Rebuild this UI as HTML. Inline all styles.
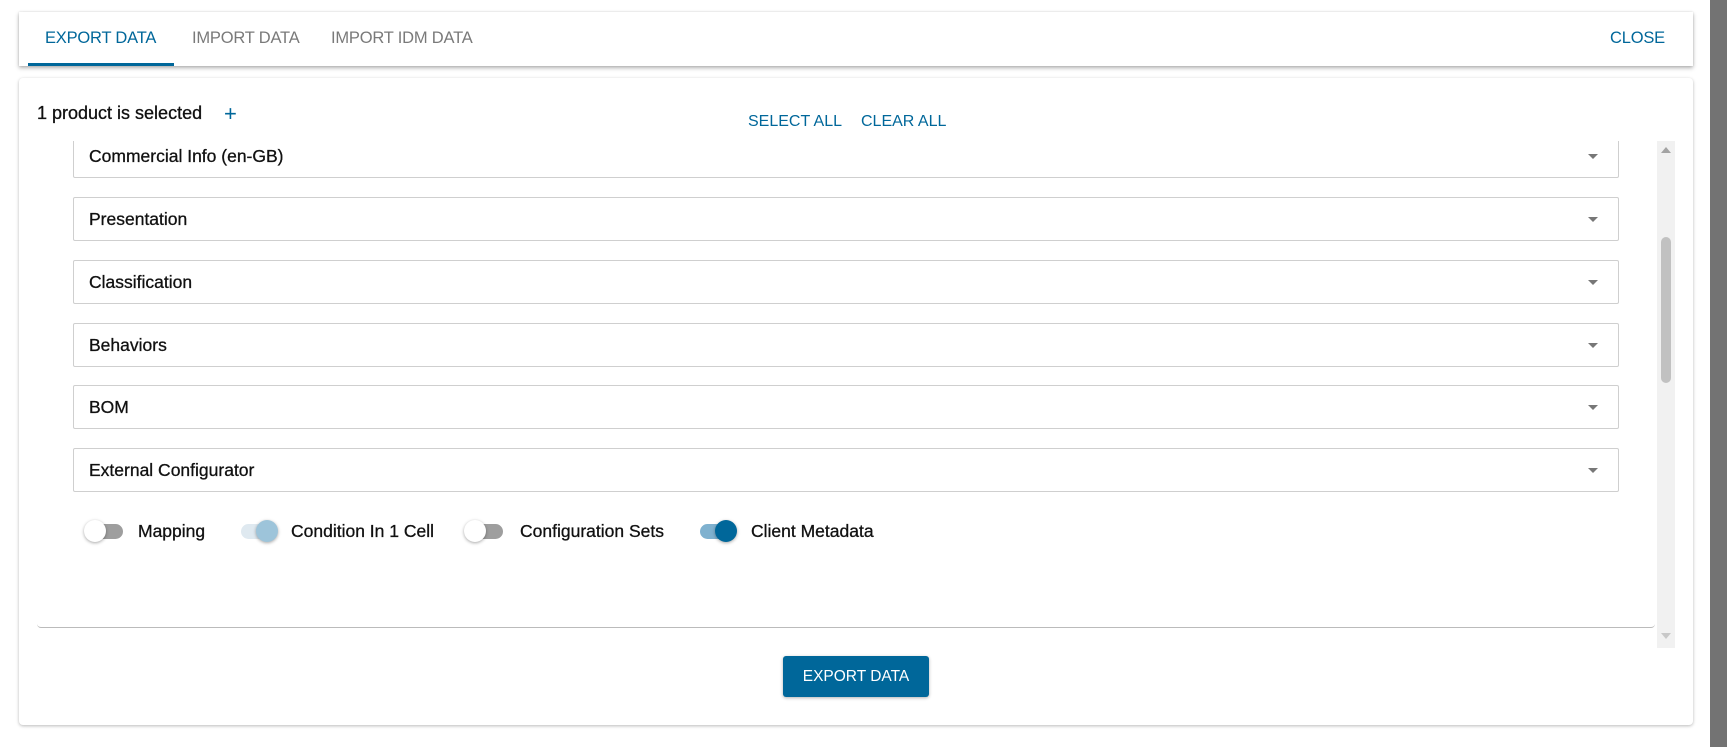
<!DOCTYPE html>
<html><head><meta charset="utf-8"><style>
*{box-sizing:border-box;margin:0;padding:0}
body{width:1727px;height:747px;background:#fff;position:relative;overflow:hidden;font-family:"Liberation Sans",Arial,sans-serif}
.abs{position:absolute}
.hdr{left:19px;top:12px;width:1674px;height:54px;background:#fff;box-shadow:0 2px 4px rgba(0,0,0,.3),0 0 2px rgba(0,0,0,.12)}
.tab{position:absolute;top:0;height:54px;line-height:52px;font-size:16.5px;color:#7a7a7a;letter-spacing:-0.2px}
.card{left:19px;top:78px;width:1674px;height:647px;background:#fff;border-radius:4px;box-shadow:0 1px 3px rgba(0,0,0,.28)}
.panel{position:absolute;left:73px;width:1546px;height:44px;border:1px solid #cfcfcf;border-radius:2px;background:#fff;font-size:17.5px;color:#111;line-height:42px;padding-left:15px;-webkit-text-stroke:0.3px #111}
.panel:after{content:"";position:absolute;right:20px;top:19px;border-left:5.5px solid transparent;border-right:5.5px solid transparent;border-top:5.5px solid #777}
.tg{position:absolute;top:523px;height:16px;width:40px}
.tr{position:absolute;left:3px;top:1px;width:36px;height:15px;border-radius:8px}
.th{position:absolute;top:-3px;width:22px;height:22px;border-radius:50%;box-shadow:0 1px 3px rgba(0,0,0,.35)}
.lb{position:absolute;top:521px;font-size:17.5px;color:#111;-webkit-text-stroke:0.3px #111}
</style></head><body>
<div class="abs" style="left:1710px;top:0;width:17px;height:747px;background:#737373"></div>
<div class="abs hdr">
<div class="tab" style="left:26px;color:#00679a">EXPORT DATA</div>
<div class="abs" style="left:9px;top:51px;width:146px;height:3px;background:#00679a"></div>
<div class="tab" style="left:173px">IMPORT DATA</div>
<div class="tab" style="left:312px">IMPORT IDM DATA</div>
<div class="tab" style="left:1591px;color:#00679a">CLOSE</div>
</div>
<div class="abs card"></div>
<div class="abs" style="left:37px;top:103px;font-size:18px;color:#111;-webkit-text-stroke:0.3px #111">1 product is selected</div>
<div class="abs" style="left:224px;top:101px;font-size:22px;color:#00679a">+</div>
<div class="abs" style="left:748px;top:113px;font-size:16px;color:#00679a">SELECT ALL</div>
<div class="abs" style="left:861px;top:113px;font-size:16px;color:#00679a">CLEAR ALL</div>
<div class="abs" style="left:37px;top:141px;width:1618px;height:487px;overflow:hidden;border-bottom:1px solid #bbb;border-radius:0 0 4px 4px">
<div class="panel" style="left:36px;top:-7px">Commercial Info (en-GB)</div>
</div>
<div class="panel" style="top:197px">Presentation</div>
<div class="panel" style="top:260px">Classification</div>
<div class="panel" style="top:323px">Behaviors</div>
<div class="panel" style="top:385px">BOM</div>
<div class="panel" style="top:448px">External Configurator</div>
<div class="tg" style="left:84px"><div class="tr" style="background:#9e9e9e"></div><div class="th" style="left:0;background:#fff"></div></div>
<div class="lb" style="left:138px">Mapping</div>
<div class="tg" style="left:238px"><div class="tr" style="background:#dfe9f0"></div><div class="th" style="left:18px;background:#9dc4da"></div></div>
<div class="lb" style="left:291px">Condition In 1 Cell</div>
<div class="tg" style="left:464px"><div class="tr" style="background:#9e9e9e"></div><div class="th" style="left:0;background:#fff"></div></div>
<div class="lb" style="left:520px">Configuration Sets</div>
<div class="tg" style="left:697px"><div class="tr" style="background:#7fb1cf"></div><div class="th" style="left:18px;background:#00679a"></div></div>
<div class="lb" style="left:751px">Client Metadata</div>
<div class="abs" style="left:1657px;top:141px;width:18px;height:507px;background:#f1f1f1"></div>
<div class="abs" style="left:1661px;top:237px;width:10px;height:146px;background:#c1c1c1;border-radius:5px"></div>
<div class="abs" style="left:1661px;top:147px;border-left:5px solid transparent;border-right:5px solid transparent;border-bottom:6px solid #a3a3a3"></div>
<div class="abs" style="left:1661px;top:633px;border-left:5px solid transparent;border-right:5px solid transparent;border-top:6px solid #c8c8c8"></div>
<div class="abs" style="left:783px;top:656px;width:146px;height:41px;background:#00679a;border-radius:3px;color:#fff;font-size:15.5px;line-height:41px;text-align:center;box-shadow:0 1px 3px rgba(0,0,0,.3)">EXPORT DATA</div>
</body></html>
